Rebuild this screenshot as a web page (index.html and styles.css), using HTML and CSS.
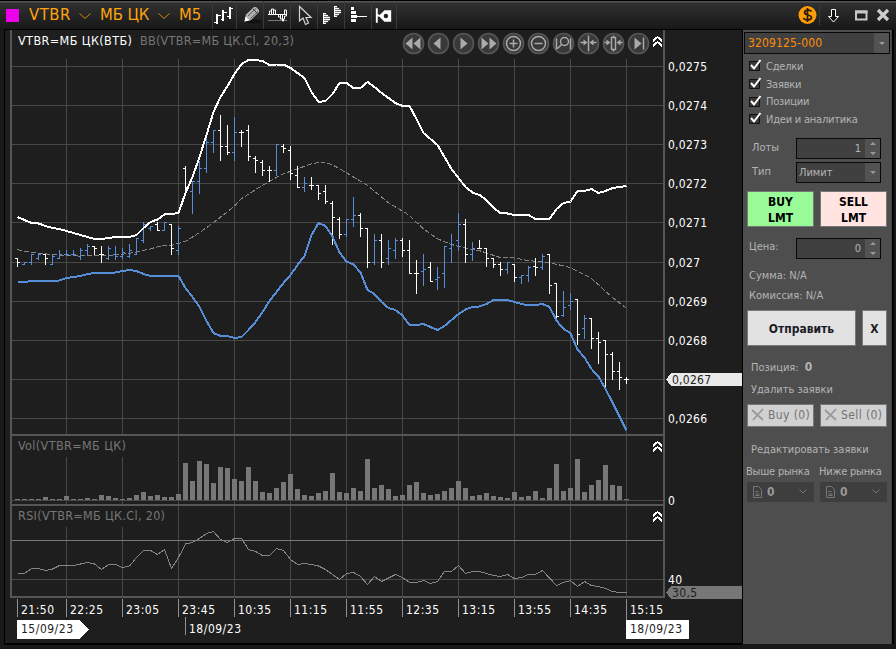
FILE: index.html
```html
<!DOCTYPE html>
<html lang="ru">
<head>
<meta charset="utf-8">
<title>VTBR</title>
<link rel="stylesheet" href="styles.css">
</head>
<body>
<div class="window">
  <header class="titlebar">
    <span class="swatch"></span>
    <span class="name ticker">VTBR</span>
    <svg class="drop" viewBox="0 0 12 8"><path d="M.5 1.5l5.500 5 5.500-5"/></svg>
    <span class="name board">МБ ЦК</span>
    <svg class="drop" viewBox="0 0 12 8"><path d="M.5 1.5l5.500 5 5.500-5"/></svg>
    <span class="name frame">M5</span>
    <div class="tools">
      <svg class="tool narrow" viewBox="213 1 23 29"><path class="w1" d="M217.500 14v10M214 22.500h3M218 15.500h3M223.500 10v11M221 19.500h2M224 12.500h3M229.500 7v12M227 16.500h2M230 8.500h3"/><path class="w1" d="M216.500 14v10M222.500 10v11M230.500 7v12"/></svg>
      <svg class="tool" viewBox="236 1 26 29"><ellipse cx="253" cy="21.500" rx="8" ry="2" fill="#121212"/><path d="M243.500 21.500l1.500-7 8-7.500h2l3 3v2l-8 8z" fill="#b4b4b4"/><path d="M247 16l8-7.500M249.500 18.500l7.500-7" stroke="#555"/><path d="M252 9l4.500 4.500" stroke="#333"/><path d="M243.500 21.500l1-5 4 4z" fill="#fff"/></svg>
      <svg class="tool" viewBox="263 1 26 29"><path d="M267 20.500h19" stroke="#777"/><path class="w1" d="M267 14.500h19M268.500 14v-3h2v-2h2v1h2v4M270.500 11v3M272.500 9v5M277.500 14v3h2v2h2v2h1v-2h1v-3h2v-2M279.500 14v3M281.500 14v5M283.500 14v-4h2v4"/></svg>
      <svg class="tool" viewBox="290 1 26 29"><path d="M298.500 6.500v14.500l3.500-3 2.500 6.500 3-1.500-2.500-5.500h5z" fill="#222" stroke="#d5d5d5" stroke-width="1.200"/></svg>
      <svg class="tool" viewBox="317 1 26 29"><path d="M322 13h2l5 4v3l-5 4h-2zM333 6h2l5 4v3l-5 4h-2z" fill="#777"/><path class="w1" d="M322.500 13v11M333.500 6v11M322 13.500h3M322 15.500h5M322 17.500h7M322 19.500h7M322 21.500h5M322 23.500h3M333 6.500h3M333 8.500h5M333 10.500h7M333 12.500h7M333 14.500h5M333 16.500h3"/></svg>
      <svg class="tool" viewBox="344 1 26 29"><path d="M350 7h3v3h-3zM350 11h5v3h-5zM350 15h6v3h-6zM350 19h5v3h-5z" fill="#fff"/><path class="w1" d="M355 16.500h11"/></svg>
      <svg class="tool" viewBox="371 1 25 29"><path d="M376 8v15M376 15.500h3" stroke="#fff" stroke-width="2"/><path d="M378 16l6-6h7v12h-7z" fill="#fff"/><circle cx="385.500" cy="16" r="2.300" fill="#222"/></svg>
    </div>
    <div class="controls">
      <svg viewBox="796 1 100 29" width="100" height="29">
        <circle cx="807.500" cy="15" r="9" fill="#ff9c0a"/><path d="M811.500 11.500c-1-2-7-2-7 1 0 3 7 2 7 5 0 3-7 3-8 .5M807.500 8v14" fill="none" stroke="#2b1a00" stroke-width="1.700"/>
        <path d="M819.500 5v20" stroke="#3a3a3a"/>
        <path d="M831.500 9.500h4v7h3l-5 5.500-5-5.500h3z" fill="#111" stroke="#fff"/>
        <path d="M856 11.500h10.500v8H856z" fill="#222" stroke="#c8c8c8" stroke-width="2"/><path d="M855 12h12.500" stroke="#c8c8c8" stroke-width="3"/>
        <path d="M878 10l10 10M888 10l-10 10" stroke="#ccc" stroke-width="3.200"/>
      </svg>
    </div>
  </header>
  <main class="body">
    <section class="chart">
      <svg id="plot" viewBox="5 30 737 613" width="737" height="613">
        <g id="grid"></g>
        <g class="mask"><path d="M12 436h122v21H12zM12 506h154v21H12z"/></g>
        <g id="volume"></g>
        <path class="level" d="M12 540.500h651"/>
        <g id="series"></g>
        <path class="edge" d="M11 30v568M664 30v568M11 435h652M11 505h652M11 597h653"/>
        <g class="text title">
          <text x="18" y="45" textLength="114">VTBR=МБ ЦК(ВТБ)</text>
          <text class="dim" x="140" y="45" textLength="154">BB(VTBR=МБ ЦК.Cl, 20,3)</text>
          <text class="dim" x="18" y="450" textLength="108">Vol(VTBR=МБ ЦК)</text>
          <text class="dim" x="18" y="520" textLength="147">RSI(VTBR=МБ ЦК.Cl, 20)</text>
        </g>
        <g class="text">
          <text x="668" y="505">0</text>
          <text x="668" y="584" textLength="14">40</text>
        </g>
        <g id="prices" class="text"></g>
        <path d="M666 379.500l5-6.500h71v13h-71z" fill="#e9e9e9"/>
        <text class="ink" x="672" y="384" textLength="39">0,0267</text>
        <path d="M666 592.500l5-6.500h71v13h-71z" fill="#777"/>
        <text class="ink" x="672" y="597" textLength="25">30,5</text>
        <g id="times" class="text"></g>
        <path d="M17 620h62l10 9.500-10 9.500H17zM626 620h63v19h-63z" fill="#fff"/>
        <text class="ink" x="21" y="633" textLength="52">15/09/23</text>
        <text class="ink" x="630" y="633" textLength="52">18/09/23</text>
        <path class="tick" d="M185.500 617v18"/>
        <g class="text"><text x="189" y="633" textLength="52">18/09/23</text></g>
        <g id="nav"></g>
        <g class="up">
          <path d="M653 41l4.500-4 4.500 4M653 46l4.500-4 4.500 4"/>
          <path d="M653 446l4.500-4 4.500 4M653 451l4.500-4 4.500 4"/>
          <path d="M653 516l4.500-4 4.500 4M653 521l4.500-4 4.500 4"/>
        </g>
      </svg>
    </section>
    <aside class="panel">
      <div class="field account"><span>3209125-000</span><i class="btn-drop"></i></div>
      <div class="checks">
        <label><svg viewBox="0 0 13 13"><path class="box" d="M.5 2.500h10v9H.5z"/><path class="mark" d="M2 6l3 3.500L11.500 1"/></svg>Сделки</label>
        <label><svg viewBox="0 0 13 13"><path class="box" d="M.5 2.500h10v9H.5z"/><path class="mark" d="M2 6l3 3.500L11.500 1"/></svg>Заявки</label>
        <label><svg viewBox="0 0 13 13"><path class="box" d="M.5 2.500h10v9H.5z"/><path class="mark" d="M2 6l3 3.500L11.500 1"/></svg>Позиции</label>
        <label><svg viewBox="0 0 13 13"><path class="box" d="M.5 2.500h10v9H.5z"/><path class="mark" d="M2 6l3 3.500L11.500 1"/></svg>Идеи и аналитика</label>
      </div>
      <div class="row lots"><span class="cap">Лоты</span><div class="field num"><span>1</span><i class="spin"></i></div></div>
      <div class="row type"><span class="cap">Тип</span><div class="field"><span>Лимит</span><i class="btn-drop"></i></div></div>
      <div class="pair sides"><button class="buy">BUY<br>LMT</button><button class="sell">SELL<br>LMT</button></div>
      <div class="row price"><span class="cap">Цена:</span><div class="field num"><span>0</span><i class="spin"></i></div></div>
      <div class="line sum">Сумма: N/A</div>
      <div class="line">Комиссия: N/A</div>
      <div class="submit"><button class="send">Отправить</button><button class="cancel">X</button></div>
      <div class="line inset position">Позиция: <b>0</b></div>
      <div class="line inset remove">Удалить заявки</div>
      <div class="pair deletes">
        <button><svg viewBox="0 0 14 14"><path d="M1 2l11 10M12 1L2 12"/></svg>Buy (0)</button>
        <button><svg viewBox="0 0 14 14"><path d="M1 2l11 10M12 1L2 12"/></svg>Sell (0)</button>
      </div>
      <div class="line inset edit">Редактировать заявки</div>
      <div class="pair heads"><span>Выше рынка</span><span>Ниже рынка</span></div>
      <div class="pair selects">
        <div><svg class="doc" viewBox="0 0 9 12"><path d="M.5.5h5l3 3v8h-8zM2.500 5.500h3M2.500 8h4M2.500 9.500h4"/></svg><b>0</b><svg class="chev" viewBox="0 0 8 5"><path d="M.5.5L4 4 7.500.5"/></svg></div>
        <div><svg class="doc" viewBox="0 0 9 12"><path d="M.5.5h5l3 3v8h-8zM2.500 5.500h3M2.500 8h4M2.500 9.500h4"/></svg><b>0</b><svg class="chev" viewBox="0 0 8 5"><path d="M.5.5L4 4 7.500.5"/></svg></div>
      </div>
    </aside>
  </main>
</div>
<script src="chart.js"></script>
</body>
</html>
```
FILE: styles.css
```css
* { box-sizing: border-box; }
body {
  margin: 0;
  font: 11px/14px "DejaVu Sans Condensed", "DejaVu Sans", sans-serif;
  font-stretch: condensed;
  color: #b4b4b4;
  background: #151515;
}
.window { width: 896px; height: 649px; overflow: hidden; background: #191919; border-top: 1px solid #000; }
.titlebar {
  height: 29px;
  display: flex;
  align-items: center;
  padding-left: 6px;
  background: linear-gradient(#555 0, #555 1px, #303030 2px, #171717 100%);
}
.swatch { width: 13px; height: 13px; background: #ec00ec; margin-right: 10px; }
.name { color: #ffa40d; font-size: 16.5px; line-height: 20px; white-space: nowrap; letter-spacing: -.1px; margin-top: -2px; }
.ticker { width: 50px; letter-spacing: .5px; }
.board { width: 58px; }
.frame { width: 33px; letter-spacing: 0; }
.drop { width: 12px; height: 8px; fill: none; stroke: #d98a08; margin-right: 9px; }
.tools { display: flex; }
.tool { width: 27px; height: 29px; border-left: 1px solid #3a3a3a; fill: none; }
.tool.narrow { width: 24px; }
.tool:last-child { width: 26px; border-right: 1px solid #3a3a3a; }
.w1 { stroke: #fff; stroke-width: 1; fill: none; }
.controls { margin-left: auto; height: 29px; }

.body { display: flex; height: 615px; padding-left: 4px; }
.chart { width: 738px; height: 615px; border: solid #000; border-width: 0 0 2px 1px; background: #1e1e1e; box-shadow: 0 -1px #000; }
#plot { display: block; shape-rendering: crispEdges; }
.grid { fill: none; stroke: #484848; }
.level { stroke: #7a7a7a; }
.edge { fill: none; stroke: #565656; stroke-width: 2; }
.mask path { fill: #1e1e1e; }
.tick { stroke: #909090; fill: none; }
.text text { fill: #fff; font-size: 12px; }
.text.title text { font-size: 12.5px; }
.text .dim { fill: #777; }
.text.title .dim { fill: #777; }
.ink { fill: #222; font-size: 12px; }
.bar-up { stroke: #568ed8; fill: none; }
.bar-down { stroke: #fff; fill: none; }
.upper { stroke: #fff; stroke-width: 2; fill: none; }
.lower { stroke: #568ed8; stroke-width: 2; fill: none; }
.middle { stroke: #858585; stroke-dasharray: 5 2; fill: none; }
.rsi { stroke: #858585; fill: none; }
.volume { fill: #777; }
.up { fill: none; stroke: #fff; stroke-width: 2; }
.nav { shape-rendering: auto; }
.nav circle { fill: #393939; stroke: #555; stroke-width: 1.7; }
.nav .solid { fill: #aaa; }
.nav .stroke { fill: none; stroke: #aaa; stroke-width: 1.5; }

.panel {
  width: 149px;
  height: 614px;
  padding: 2px 0 0 4px;
  margin-left: 1px;
  background: #4e4e4e;
  border-right: 1px solid #444;
  box-shadow: 1px 0 #000, 2px 0 #000, -1px 0 #000;
}
.field {
  display: flex;
  width: 85px;
  height: 21px;
  border: 1px solid #080808;
  background: #404040;
  line-height: 19px;
  padding-left: 2px;
}
.field span { flex: 1; }
.field.num span { text-align: right; padding-right: 4px; }
.field i { width: 15px; background: #525252; display: flex; }
.account { width: 146px; height: 22px; padding-left: 3px; margin-left: -3px; color: #ff8d0b; font-size: 12px; line-height: 21px; letter-spacing: .15px; }
.btn-drop::after, .spin::before, .spin::after {
  content: "";
  margin: auto;
  border: 3px solid transparent;
  border-top-color: #999;
  border-bottom: 0;
}
.field .spin { flex-direction: column; }
.spin::before { border-top: 0; border-bottom: 3px solid #999; }
.checks { padding: 4px 0 0 3px; letter-spacing: -.22px; }
.checks label { display: flex; align-items: center; height: 17.7px; }
.checks svg { width: 13px; height: 13px; margin: -2px 4px 0 -1px; }
.box { fill: #383838; stroke: #111; }
.mark { fill: none; stroke: #fff; stroke-width: 2; }
.row { display: flex; align-items: center; padding-left: 5px; height: 21px; }
.cap { width: 44px; padding-bottom: 1px; }
.lots { margin-top: 9px; }
.type { margin-top: 3px; }
.pair { display: flex; gap: 6px; }
.pair > * { width: 67px; }
button {
  font: bold 12px/16px "DejaVu Sans Condensed", "DejaVu Sans", sans-serif;
  padding: 0;
  border: 1px solid #777;
  color: #1b1b26;
  background: #e2e2e2;
}
.sides { height: 36px; margin-top: 8px; }
.sides button { color: #000; padding-top: 2px; }
.sides .buy { background: #98fb98; }
.sides .sell { background: #ffe4e1; }
.price { margin-top: 11px; padding-left: 2px; }
.price .cap { width: 47px; padding-bottom: 3px; }
.line { height: 20px; line-height: 20px; padding-left: 2px; white-space: nowrap; }
.inset { padding-left: 4px; }
.sum { margin-top: 7px; }
.submit { display: flex; gap: 6px; height: 36px; margin-top: 4px; }
.submit button { padding-top: 2px; }
.send { width: 109px; }
.cancel { width: 25px; }
.position { margin-top: 11px; }
.position b { margin-left: 3px; font-size: 12px; }
.remove { margin-top: 3px; }
.deletes { height: 23px; margin-top: 4px; }
.deletes button { font-weight: normal; color: #737373; background: #d1d1d1; display: flex; align-items: center; padding-left: 3px; white-space: nowrap; letter-spacing: .4px; }
.deletes svg { width: 14px; height: 14px; margin-right: 3px; fill: none; stroke: #999; stroke-width: 1.8; }
.edit { margin-top: 13px; }
.heads { height: 20px; line-height: 20px; margin-top: 2px; white-space: nowrap; letter-spacing: -.2px; }
.heads span { margin-left: -1px; margin-right: 1px; }
.selects div { height: 20px; display: flex; align-items: center; background: #3e3e3e; padding: 0 7px 0 6px; font-size: 12px; color: #999; }
.doc { width: 9px; height: 12px; margin-right: 5px; fill: none; stroke: #777; }
.chev { width: 8px; height: 5px; margin-left: auto; fill: none; stroke: #777; }
```
FILE: chart.js
```js
const el = id => document.getElementById(id);
const X = i => 17.5 + 7 * i;

// Bars: open, high, low, close (plot coordinates), direction (1 = rising).
const bars = `258 258 266 262 0|264 262 264 262 1|262 254 264 254 1|258 253 259 254 1|254 254 264 258 0|264 254 264 256 1
258 250 258 254 1|254 250 255 254 1|254 250 255 254 1|256 248 259 250 1|250 244 254 246 1|246 246 254 248 0
254 246 262 254 0|258 246 259 248 1|254 246 259 256 1|256 248 258 252 1|256 244 257 250 1|254 238 254 238 1
240 222 242 224 1|228 226 230 226 1|224 222 230 230 0|230 222 230 222 1|224 224 254 248 0|250 226 254 228 1
168 166 193 187 0|191 181 213 181 1|181 161 193 168 1|168 137 172 142 1|142 130 152 130 1|130 115 160 146 0
146 125 154 152 0|152 117 160 132 1|132 130 146 132 0|130 125 160 156 0|158 156 172 160 0|162 160 175 170 0
170 166 181 170 0|170 144 175 144 1|146 144 152 148 0|150 146 179 173 0|175 166 187 187 0|187 177 191 183 1
185 177 189 185 0|185 185 199 193 0|191 185 203 201 0|203 201 244 217 0|219 217 238 234 0|234 219 236 219 1
219 197 226 215 1|215 213 236 228 0|228 228 267 262 0|262 234 264 240 1|240 234 267 262 0|258 240 264 248 1
250 238 258 240 1|240 238 256 250 0|250 240 273 273 0|273 260 293 273 0|271 254 285 269 1|267 262 281 281 0
279 267 289 277 1|273 246 287 246 1|248 234 262 244 1|240 213 250 224 1|224 219 262 254 0|254 242 260 248 1
248 240 248 248 0|248 248 266 258 0|258 258 267 264 0|264 262 275 269 0|269 262 273 262 1|264 264 281 277 0
277 275 283 275 1|275 266 281 267 1|266 258 275 267 0|267 254 269 256 1|254 254 293 285 0|283 283 318 316 0
315 291 316 307 1|305 293 309 301 1|299 299 344 334 0|328 315 338 318 1|318 318 348 338 0|338 332 363 342 0
340 340 386 354 0|354 352 379 371 0|371 362 389 377 0|379 377 383 379 0`.split(/[|\n]/).map(s => s.split(' ').map(Number));

const upper = [217,220,223,223.5,226,228,229,231,233,235,237,239,239,238,237,237,237,235,228,222,219.5,214.5,214,213,193,177,157,135,112,97,86,74,64,60,60,61,65,64.5,64.5,68,73,78,92,102,101,94,83,83,88,88,82,87,93,98,103,106,106,119,133,139,145,157,169,178,187,192.5,195,200,208,213,213.5,215,215,215,219,219,219,209,203,201.5,191,191,189,193,191,188,187,186];
const lower = [282,282,281,281,281,281,280.5,278,277,276,274,273,273,273,272.5,271,270,271,274,276,276,276,276,276,288,297,307,321,333,336,336,338,337,330,322,312,301,292,283,275,265,256,235,223,226,236.5,252.5,261.5,264.5,272.5,290,294,302,308,310,315.5,325,325,324,327,330,326,320,314,309.5,307,306.5,304,300,300,300,302,304,305.5,305,304,307,320.5,329,333,349.5,357.5,369,376.5,389,402.5,416.5,430.5];
const rsi = [573.5,573.5,568.5,568.5,570.5,569,565.5,565.5,565.5,564,562.5,564,569.5,564.5,564.5,567.5,566,557.5,550.5,550.5,554.5,549.5,568.5,557.5,544,542.5,538.5,533.5,531.5,539.5,542.5,538.5,538.5,549.5,551.5,555.5,555.5,548.5,550.5,559.5,564.5,563.5,564.5,566,569.5,574.5,579.5,573.5,572.5,576.5,584.5,576.5,581.5,578,574.5,577.5,582.5,582.5,580.5,583.5,581.5,571.5,571.5,565.5,573.5,571.5,571.5,573.5,575.5,576.5,574.5,578.5,577.5,574.5,574.5,570.5,578,585.5,582.5,580.5,586.5,581.5,585.5,586.5,588.5,591.5,592.5,592.5];
const volume = [1,1,1,1,3,1,1,4,1,1,2,1,5,4,2,1,2,5,8,4,5,3,3,6,37,19,39,36,17,33,32,21,19,33,19,8,7,12,18,26,11,5,4,7,9,27,8,7,12,9,41,12,15,11,4,5,15,18,7,5,6,9,12,19,12,4,5,7,4,3,2,8,3,4,9,2,12,36,9,12,41,8,15,20,35,15,14,1];
const middle = '17,249.5 31,252.500 52,254.500 66,255.500 87,256 108,255.500 129,253.500 143,250.500 150,249 164,245 173,245 185,241.500 199,233 213,223 234,206.500 241,199 255,190 269,181.500 283,174 297,169 311,164 318,162.500 325,163 332,164.500 346,172.500 367,185 388,202.500 409,215 423,228.500 437,238.500 451,244.500 472,249.500 479,250.500 500,257.500 514,258 528,260.500 549,262.500 570,267.500 591,278 612,297 626,308';

const line = (data, cls) => `<polyline class="${cls}" points="${data.map((y, i) => X(i) + ',' + y).join(' ')}"/>`;

const rows = [66, 105, 144, 183, 222, 262, 301, 340, 379, 418];
let grid = [...rows, 500, 579].map(y => `M12 ${y + .5}h651`).join('');
for (let x = 66; x <= 626; x += 56) grid += `M${x + .5} 59V596`;
el('grid').innerHTML = `<path class="grid" d="${grid}"/>`;

el('volume').innerHTML = volume.map((h, i) => `<rect class="volume" x="${15 + 7 * i}" y="${500 - h}" width="5" height="${h}"/>`).join('');

let up = '', down = '';
bars.forEach(([o, h, l, c, rising], i) => {
  const x = 17 + 7 * i;
  const d = `M${x + .5} ${h}V${l + 1}M${x - 2} ${o + .5}h2M${x + 1} ${c + .5}h2`;
  if (rising) up += d; else down += d;
});
el('series').innerHTML = `<polyline class="middle" points="${middle}"/>` +
  `<path class="bar-up" d="${up}"/><path class="bar-down" d="${down}"/>` +
  line(upper, 'upper') + line(lower, 'lower') + line(rsi, 'rsi');

const prices = ['0,0275', '0,0274', '0,0273', '0,0272', '0,0271', '0,027', '0,0269', '0,0268', '', '0,0266'];
el('prices').innerHTML = prices.map((p, i) => p && `<text x="668" y="${rows[i] + 5}" textLength="${p.length > 5 ? 39 : 32}">${p}</text>`).join('');

const times = ['21:50', '22:25', '23:05', '23:45', '10:35', '11:15', '11:55', '12:35', '13:15', '13:55', '14:35', '15:15'];
el('times').innerHTML = times.map((t, i) => {
  const x = i ? 10 + 56 * i : 17;
  return `<path class="tick" d="M${x + .5} 599v${i === 11 ? 21 : 18}"/><text x="${x + 4}" y="614" textLength="33">${t}</text>`;
}).join('');

const icons = [
  '<path class="solid" d="M-8 0l7-6v12zM0 0l7-6v12z"/>',
  '<path class="solid" d="M-5 0l7-6v12z"/>',
  '<path class="solid" d="M4 0l-7-6v12z"/>',
  '<path class="solid" d="M8 0l-7-6v12zM0 0l-7-6v12z"/>',
  '<circle class="stroke" r="7"/><path class="stroke" d="M-4 0h8M0-4v8"/>',
  '<circle class="stroke" r="7"/><path class="stroke" d="M-4 0h8"/>',
  '<circle class="stroke" cx="1" cy="-2" r="4"/><path class="stroke" d="M-2 1l-4 4M-7-5V6M7-5V6"/>',
  '<path class="stroke" d="M0-8V8M-8-1h5M8-1h-5"/><path class="solid" d="M-1-1l-4-3v6zM1-1l4-3v6z"/>',
  '<path class="stroke" d="M-2-6h4V6h-4zM0-8v2M0 6v2M-9-1h3M9-1h-3"/><path class="solid" d="M-3-1l-4-3v6zM3-1l4-3v6z"/>',
  '<path class="solid" d="M3 0l-7-6v12z"/><path class="stroke" d="M5-6V6"/>'
];
el('nav').innerHTML = icons.map((g, i) => `<g class="nav" transform="translate(${413.5 + 25 * i} 43.500)"><circle r="10"/>${g}</g>`).join('');
```
